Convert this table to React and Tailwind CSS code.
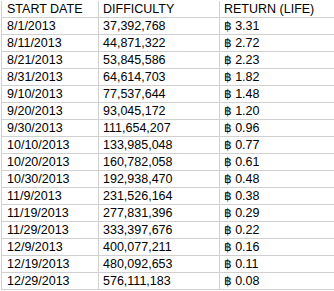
const ROWS = [
  ['8/1/2013', '37,392,768', '3.31'],
  ['8/11/2013', '44,871,322', '2.72'],
  ['8/21/2013', '53,845,586', '2.23'],
  ['8/31/2013', '64,614,703', '1.82'],
  ['9/10/2013', '77,537,644', '1.48'],
  ['9/20/2013', '93,045,172', '1.20'],
  ['9/30/2013', '111,654,207', '0.96'],
  ['10/10/2013', '133,985,048', '0.77'],
  ['10/20/2013', '160,782,058', '0.61'],
  ['10/30/2013', '192,938,470', '0.48'],
  ['11/9/2013', '231,526,164', '0.38'],
  ['11/19/2013', '277,831,396', '0.29'],
  ['11/29/2013', '333,397,676', '0.22'],
  ['12/9/2013', '400,077,211', '0.16'],
  ['12/19/2013', '480,092,653', '0.11'],
  ['12/29/2013', '576,111,183', '0.08'],
]

const Row = ({ cells }) => (
  <div className="grid grid-cols-[97px_121px_1fr] h-[17px] border-b border-[#d0d0d0]">
    <div className="border-r border-[#d0d0d0] pl-[5px] leading-[16px] whitespace-nowrap overflow-hidden">{cells[0]}</div>
    <div className="border-r border-[#d0d0d0] pl-[4px] leading-[16px] whitespace-nowrap overflow-hidden">{cells[1]}</div>
    <div className="pl-[4px] leading-[16px] whitespace-nowrap overflow-hidden">{cells[2]}</div>
  </div>
)

export default function App() {
  return (
    <div className="w-[334px] h-[291px] bg-white pl-px pt-px overflow-hidden">
      <div className="border-l border-[#d0d0d0] text-[12.5px] text-black" style={{ fontFamily: '"Liberation Sans", Arial, sans-serif' }}>
        <Row cells={['START DATE', 'DIFFICULTY', 'RETURN (LIFE)']} />
        {ROWS.map((r) => (
          <Row
            key={r[0]}
            cells={[
              r[0],
              r[1],
              <span>
                <span className="text-[12px]" style={{ fontFamily: '"DejaVu Sans", sans-serif' }}>฿</span> {r[2]}
              </span>,
            ]}
          />
        ))}
      </div>
    </div>
  )
}
